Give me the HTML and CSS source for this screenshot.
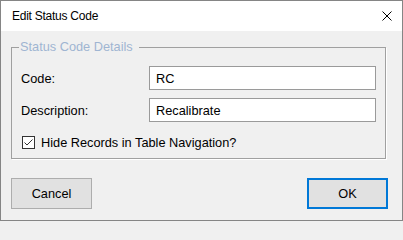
FILE: index.html
```html
<!DOCTYPE html>
<html>
<head>
<meta charset="utf-8">
<title>Edit Status Code</title>
<link rel="stylesheet" href="styles.css">
</head>
<body>
<div class="window">
  <div class="titlebar">
    <span class="title">Edit Status Code</span>
    <svg class="close" width="10" height="10" viewBox="0 0 10 10">
      <path d="M0.5 0.5 L9.5 9.5 M9.5 0.5 L0.5 9.5" stroke="#000" stroke-width="1" fill="none"/>
    </svg>
  </div>
  <div class="content">
    <fieldset class="group">
      <legend class="group-title">Status Code Details</legend>
      <div class="row">
        <span class="label">Code:</span>
        <div class="input">RC</div>
      </div>
      <div class="row row-second">
        <span class="label">Description:</span>
        <div class="input">Recalibrate</div>
      </div>
      <div class="check-row">
        <svg class="checkbox" width="13" height="13" viewBox="0 0 13 13">
          <rect x="0.5" y="0.5" width="12" height="12" fill="#fff" stroke="#333"/>
          <path d="M2.5 6.5 L5 9 L10.5 3.5" stroke="#333" stroke-width="1" fill="none"/>
        </svg>
        <span class="check-label">Hide Records in Table Navigation?</span>
      </div>
    </fieldset>
    <div class="buttons">
      <div class="btn">Cancel</div>
      <div class="btn btn-default">OK</div>
    </div>
  </div>
</div>
</body>
</html>
```
FILE: styles.css
```css
html, body {
  margin: 0;
  padding: 0;
}
body {
  font-family: "Liberation Sans", Arial, sans-serif;
  font-size: 12.75px;
  color: #000;
  background: #f0f0f0;
}
.window {
  width: 403px;
  height: 221px;
  box-sizing: border-box;
  border: 1px solid #858585;
  display: flex;
  flex-direction: column;
}
.titlebar {
  height: 30px;
  flex: none;
  background: #fff;
  display: flex;
  align-items: center;
  justify-content: space-between;
  padding: 0 10px 0 11px;
}
.title {
  font-size: 12px;
  letter-spacing: -0.25px;
  line-height: 14px;
}
.close {
  display: block;
}
.content {
  flex: 1;
  background: #f0f0f0;
  padding: 9px 0 0 10px;
}
.group {
  width: 375px;
  box-sizing: border-box;
  margin: 0;
  padding: 12px 9px 9px 9px;
  border: 1px solid #a0a0a0;
  box-shadow: 1px 1px 0 #fff;
  min-width: 0;
}
.group-title {
  color: #9fb5d2;
  font-size: 12.75px;
  line-height: 14px;
  padding: 0 6px 0 1px;
  margin-left: -2px;
}
.row {
  display: flex;
  align-items: center;
  height: 24px;
}
.row-second {
  margin-top: 8px;
}
.label {
  width: 128px;
  flex: none;
}
.input {
  width: 227px;
  height: 24px;
  box-sizing: border-box;
  background: #fff;
  border: 1px solid #9a9a9a;
  padding-left: 6px;
  display: flex;
  align-items: center;
}
.check-row {
  margin-top: 14px;
  height: 13px;
  display: flex;
  align-items: center;
  padding-left: 1px;
}
.checkbox {
  display: block;
  flex: none;
}
.check-label {
  margin-left: 6px;
  line-height: 15px;
}
.buttons {
  width: 377px;
  margin-top: 19px;
  display: flex;
  justify-content: space-between;
}
.btn {
  width: 81px;
  height: 31px;
  box-sizing: border-box;
  background: #e1e1e1;
  border: 1px solid #adadad;
  display: flex;
  align-items: center;
  justify-content: center;
}
.btn-default {
  border: 2px solid #0078d7;
}
```
